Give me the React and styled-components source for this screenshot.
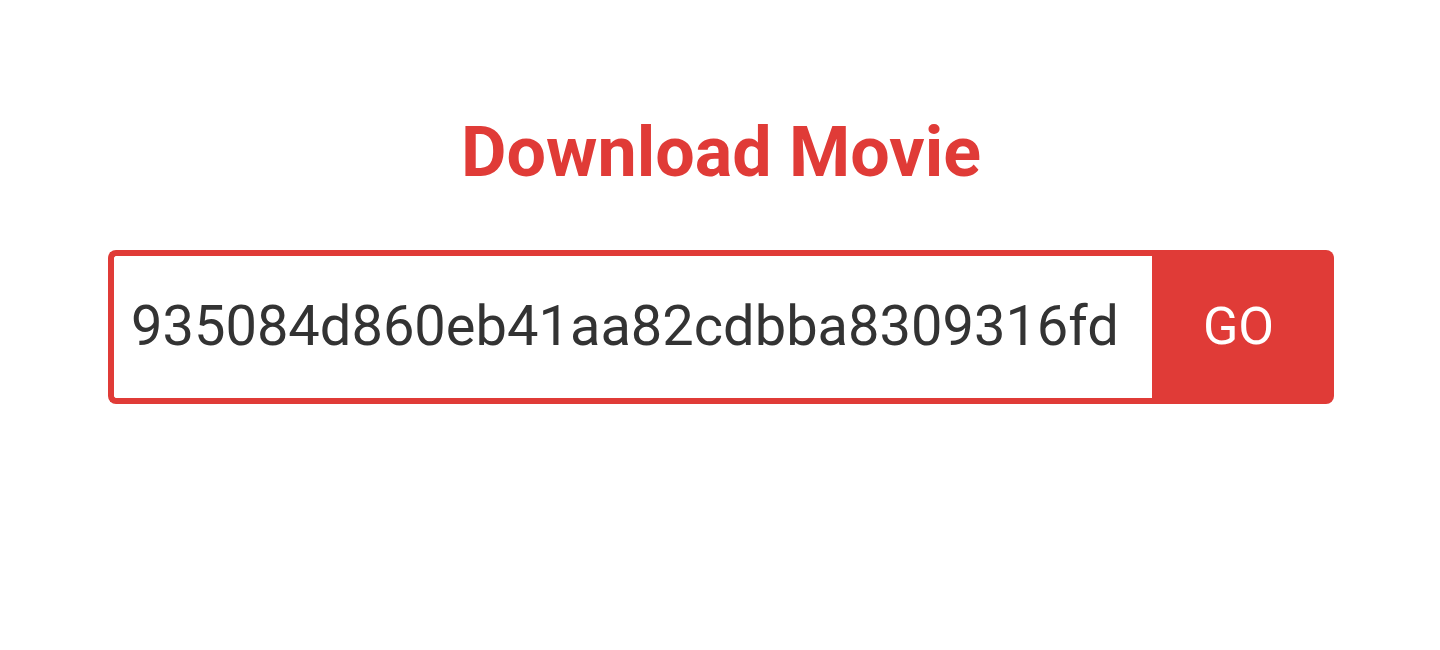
import React from "react";
import styled, { createGlobalStyle } from "styled-components";

const Global = createGlobalStyle`
  html, body { margin: 0; padding: 0; background: #fff; }
  body { font-family: Roboto, "Noto Sans", sans-serif; }
`;

const Page = styled.main`
  display: flex;
  flex-direction: column;
  align-items: flex-start;
  padding: 104px 0 0 108px;
`;

const Title = styled.h1`
  margin: 0;
  width: 1226px;
  text-align: center;
  font-family: Roboto, sans-serif;
  font-weight: 700;
  font-size: 70px;
  line-height: 96px;
  color: #e03b37;
`;

const Form = styled.form`
  display: flex;
  width: 1226px;
  height: 154px;
  margin-top: 50px;
`;

const Input = styled.input`
  flex: 1;
  min-width: 0;
  box-sizing: border-box;
  height: 100%;
  border: 6px solid #e03b37;
  border-right: none;
  border-radius: 8px 0 0 8px;
  padding: 0 0 2px 17px;
  font-family: Roboto, sans-serif;
  font-size: 56px;
  color: #333;
  outline: none;
  background: #fff;
`;

const Button = styled.button`
  width: 182px;
  height: 100%;
  border: none;
  border-radius: 0 8px 8px 0;
  background: #e03b37;
  color: #fff;
  font-family: Roboto, sans-serif;
  font-size: 52px;
  padding: 0 9px 2px 0;
  cursor: pointer;
`;

export default function App() {
  return (
    <>
      <Global />
      <Page>
        <Title>Download Movie</Title>
        <Form onSubmit={(e) => e.preventDefault()}>
          <Input defaultValue="935084d860eb41aa82cdbba8309316fd" />
          <Button type="submit">GO</Button>
        </Form>
      </Page>
    </>
  );
}
